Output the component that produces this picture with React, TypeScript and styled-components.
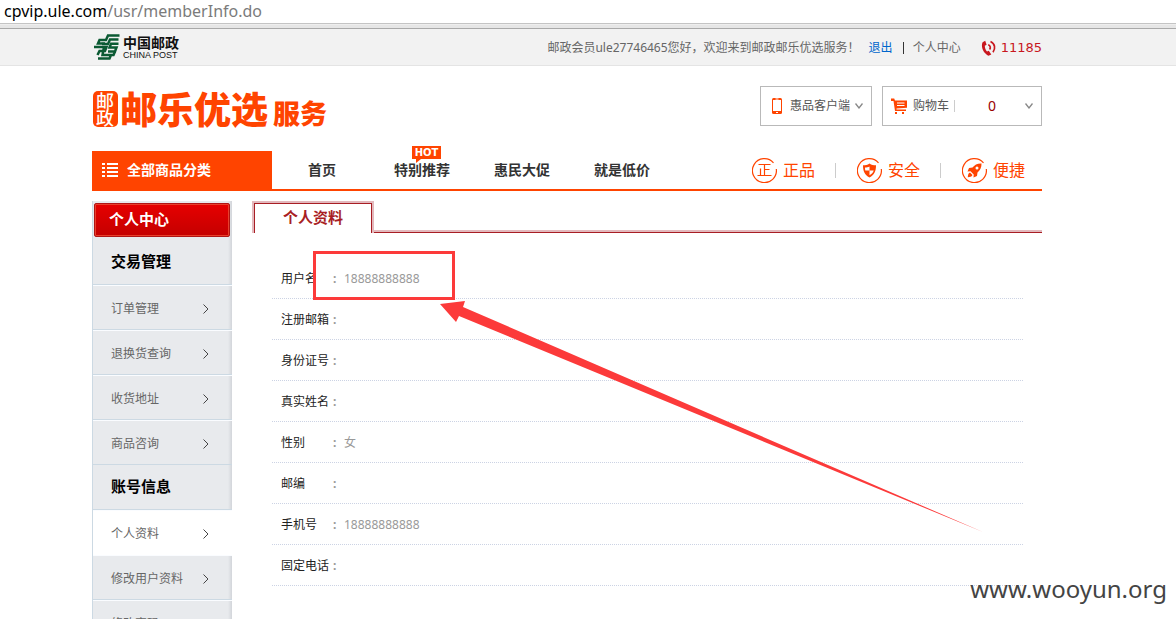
import React from 'react';
import styled, { createGlobalStyle, css } from 'styled-components';

const orange = '#ff4400';
const annotation = '#fc3a3a';

const GlobalStyle = createGlobalStyle`
  * { box-sizing: border-box; }
  html, body, #root { height: 100%; }
  body {
    margin: 0;
    overflow: hidden;
    background: #fff;
    color: #666;
    font: 12px/18px "Noto Sans", "Noto Sans CJK SC", sans-serif;
  }
  h2, h3, p, ul, dl, dd { margin: 0; padding: 0; }
  ul { list-style: none; }
  a { color: inherit; text-decoration: none; }
  svg { display: block; flex: none; }
`;

const Page = styled.div`
  position: relative;
  height: 100%;
  overflow: hidden;
`;

const AddressBar = styled.div`
  height: 29px;
  padding-left: 4px;
  border-bottom: 1px solid #a9a9a9;
  background: linear-gradient(#fff 23px, #c4c4c4 23px, #c4c4c4 24px, #f6f6f6 24px, #e6e6e6 25px);
  color: #7b7b7b;
  font-size: 16px;
  line-height: 22px;
  white-space: nowrap;
  overflow: hidden;
`;

const Host = styled.span`
  color: #000;
`;

const Container = styled.div`
  max-width: 992px;
  margin: 0 auto;
  padding-right: 42px;
`;

const TopBar = styled.div`
  background: #f2f2f2;
  border-bottom: 1px solid #e4e4e4;
`;

const TopBarInner = styled(Container)`
  display: flex;
  justify-content: space-between;
  align-items: center;
  height: 36px;
`;

const PostLogo = styled.a`
  display: flex;
  align-items: center;
  gap: 3px;
  padding-left: 2px;
  color: #111;
`;

const PostNames = styled.span`
  display: flex;
  flex-direction: column;
  font: 700 14px/16px "Noto Sans CJK SC", sans-serif;
`;

const PostLatin = styled.span`
  font: 9px/10px "Liberation Sans", sans-serif;
`;

const Greeting = styled.div`
  display: flex;
  align-items: center;
  padding-top: 2px;
`;

const Logout = styled.a`
  margin-left: 9px;
  color: #0066cc;
`;

const Bar = styled.span`
  width: 1px;
  height: 12px;
  margin: 0 9px 0 10px;
  background: #333;
`;

const Hotline = styled.span`
  display: flex;
  align-items: center;
  gap: 4px;
  margin-left: 20px;
  color: #c8171e;
  font: 13px/18px "DejaVu Sans", sans-serif;
`;

const Header = styled(Container)`
  display: flex;
  justify-content: space-between;
  align-items: flex-start;
  padding-top: 20px;
  height: 85px;
`;

const Brand = styled.a`
  && { color: ${orange}; }
  display: flex;
  align-items: flex-end;
  margin-top: 3px;
  padding-left: 1px;
  font-family: "Noto Sans CJK SC", sans-serif;
  font-weight: 900;
`;

const Seal = styled.span`
  width: 25px;
  height: 36px;
  margin-right: 2px;
  padding: 1px 3px;
  border-radius: 5px;
  background: ${orange};
  color: #fff;
  font-size: 18px;
  font-weight: 500;
  line-height: 17px;
`;

const BrandMain = styled.span`
  font-size: 37px;
  line-height: 38px;
`;

const BrandSub = styled.span`
  margin-left: 5px;
  font-size: 27px;
  line-height: 28px;
`;

const HeaderTools = styled.div`
  display: flex;
  gap: 10px;
`;

const ToolButton = styled.button<{ $width: number }>`
  display: flex;
  align-items: center;
  width: ${(p) => p.$width}px;
  height: 40px;
  padding: 0 8px;
  border: 1px solid #b9b9b9;
  background: #fff;
  color: #555;
  font: inherit;
  white-space: nowrap;
`;

const ToolLabel = styled.span`
  margin: 0 5px;
`;

const CartCount = styled.span`
  flex: 1;
  margin-right: 4px;
  padding-left: 8px;
  border-left: 1px solid #ccc;
  color: #900;
  font-size: 14px;
  line-height: 12px;
  text-align: center;
`;

const NavBar = styled.nav`
  display: flex;
  height: 40px;
  border-bottom: 2px solid ${orange};
`;

const Categories = styled.a`
  display: flex;
  align-items: center;
  gap: 9px;
  width: 180px;
  height: 40px;
  padding: 0 10px 2px;
  background: ${orange};
  && { color: #fff; }
  font-size: 14px;
  font-weight: 700;
`;

const NavLink = styled.a`
  position: relative;
  width: 100px;
  color: #333;
  font-size: 14px;
  font-weight: 700;
  line-height: 38px;
  text-align: center;
`;

const HotBadge = styled.span`
  position: absolute;
  top: -5px;
  left: 40px;
  width: 29px;
  height: 13px;
  background: ${orange};
  color: #fff;
  font: 700 10px/14px "DejaVu Sans", sans-serif;

  &::after {
    content: '';
    position: absolute;
    top: 13px;
    left: 4px;
    border-top: 4px solid ${orange};
    border-right: 5px solid transparent;
  }
`;

const Promises = styled.ul`
  display: flex;
  align-items: center;
  margin-left: auto;
  padding-right: 17px;
`;

const PromiseItem = styled.li`
  display: flex;
  align-items: center;
  gap: 6px;
  color: ${orange};
  font-size: 16px;

  & + & {
    margin-left: 20px;
  }
  & + &::before {
    content: '';
    width: 1px;
    height: 15px;
    margin-right: 15px;
    background: #ccc;
  }
`;

const Columns = styled(Container)`
  display: flex;
  align-items: flex-start;
  gap: 20px;
  padding-top: 10px;
`;

const sideEdge = css`
  background: linear-gradient(to left, #d2d5da, #e8eaed 4px);
`;

const Sidebar = styled.aside`
  flex: none;
  width: 140px;
  padding-top: 2px;
  border-left: 1px solid #ccd9e3;
  ${sideEdge}
`;

const SideHeading = styled.h2`
  height: 34px;
  margin: 0 2px 3px 1px;
  padding-left: 14px;
  border: 1px solid #b01515;
  border-radius: 2px;
  background: linear-gradient(#e60000, #c40000);
  box-shadow: inset 0 0 0 1px #e8402c;
  color: #fff;
  font-size: 15px;
  line-height: 31px;
`;

const SideTitle = styled.h3`
  height: 45px;
  padding-left: 18px;
  border-bottom: 1px solid #ccd9e3;
  color: #000;
  font-size: 15px;
  line-height: 42px;
`;

const SideLink = styled.a<{ $active?: boolean }>`
  display: flex;
  align-items: center;
  justify-content: space-between;
  height: 45px;
  padding: 2px 23px 0 18px;
  border-top: 1px solid #fafcff;
  border-bottom: 1px solid ${(p) => (p.$active ? '#fff' : '#ccd9e3')};
  ${(p) => p.$active && 'background: #fff;'}
`;

const Main = styled.main`
  flex: 1;
`;

const TabStrip = styled.div`
  display: flex;
  height: 32px;

  &::after {
    content: '';
    flex: 1;
    border-bottom: 1px solid #a81e24;
    box-shadow: inset 0 -2px #e3b9bd;
  }
`;

const Tab = styled.h2`
  width: 122px;
  border: 2px solid #e3b9bd;
  border-bottom: 0;
`;

const TabFace = styled.span`
  display: block;
  height: 30px;
  border: 1px solid #a81e24;
  border-bottom: 0;
  color: #a81e24;
  font-size: 15px;
  line-height: 26px;
  text-align: center;
`;

const Profile = styled.dl`
  margin: 25px 19px 0 20px;
`;

const Field = styled.div`
  display: flex;
  align-items: center;
  height: 41px;
  padding: 2px 0 0 9px;
  border-bottom: 1px dotted #ccd3e4;
`;

const FieldName = styled.dt`
  width: 52px;
  color: #222;
  white-space: nowrap;
`;

const FieldValue = styled.dd`
  color: #999;

  &::before {
    content: ':';
    display: inline-block;
    width: 11px;
    font-weight: 700;
  }
`;

const Highlight = styled.div`
  position: absolute;
  top: 251px;
  left: 313px;
  width: 142px;
  height: 49px;
  border: 3px solid ${annotation};
`;

const Pointer = styled.svg`
  position: absolute;
  top: 300px;
  left: 440px;
`;

const Watermark = styled.p`
  position: absolute;
  right: 9px;
  bottom: 13px;
  color: #444;
  font: 24px/34px "Noto Sans", sans-serif;
`;

const PostEmblem = () => (
  <svg width="26" height="26" viewBox="0 0 26 26" fill="none" stroke="#0b5a33" strokeWidth="2.500">
    <path d="M25.500 1.500H14L12 6H5.500L4 9.500H11" />
    <path d="M24.500 5.500H16L14 10H8" />
    <path d="M0 13H12.500L11 17H5.500L3.500 21" />
    <path d="M24.500 9.800H17L15.500 13.500H22.500L21 17.500H14" />
    <path d="M10 13L8.500 21H19.500L21 17.500M4 24.500H15.500L17 21" />
  </svg>
);

const PhoneIcon = () => (
  <svg width="16" height="16" viewBox="0 0 16 16" fill="none" stroke="#c8171e">
    <path d="M4.200 .800L1.600 2.300C-.500 7 2.500 13.300 7.500 15.800L10.300 14.600L7.800 10.800L6 11.500C4.500 10 3.800 8 3.800 5.800L5.600 4.800Z" fill="#c8171e" stroke="none" />
    <path d="M7.200 4.800C9.500 5.500 9.800 8 8.600 9.500M9.500 1.500C14 3.500 14.800 8.500 12 12.200" strokeWidth="1.700" />
  </svg>
);

const MobileIcon = () => (
  <svg width="16" height="16" viewBox="0 0 16 16">
    <rect x="3" width="10" height="16" rx="1.500" fill={orange} />
    <rect x="4" y="2" width="8" height="11" fill="#fff" />
    <path d="M6.500 1h3M7 14.500h2" stroke="#fff" strokeWidth="1" />
  </svg>
);

const CartIcon = () => (
  <svg width="17" height="16" viewBox="0 0 17 16">
    <path d="M0 .500H3.200L4 2.500H16V9.800L5.500 10.500V11.500H15V13H4L2.500 3H0Z" fill={orange} />
    <path d="M6 5H13.500M6 7.500H13.500" stroke="#fff" strokeWidth="1" />
    <rect x="4" y="14" width="2" height="2" fill={orange} />
    <rect x="11" y="14" width="2" height="2" fill={orange} />
  </svg>
);

const ChevronDown = () => (
  <svg width="8" height="6" viewBox="0 0 8 6" fill="none" stroke="#888" strokeWidth="1.300">
    <path d="M.5 .5L4 5L7.500 .5" />
  </svg>
);

const ChevronRight = () => (
  <svg width="6" height="10" viewBox="0 0 6 10" fill="none" stroke="#444">
    <path d="M.5 .5L5 5L.5 9.500" />
  </svg>
);

const ListIcon = () => (
  <svg width="16" height="14" viewBox="0 0 16 14" stroke="#fff" strokeWidth="2">
    <path d="M0 1H3M5 1H16M0 5H3M5 5H16M0 9H3M5 9H16M0 13H3M5 13H16" />
  </svg>
);

const Ring = ({ children }: { children: React.ReactNode }) => (
  <svg width="25" height="25" viewBox="0 0 25 25" fill="none" stroke={orange}>
    <path d="M21.500 4.800A12 12 0 1 0 24.300 11" strokeWidth="1.200" />
    {children}
  </svg>
);

const SealMark = () => (
  <Ring>
    <path d="M6.500 6.500H18.500M12.500 6.500V17.500M12.500 11.500H17.500M8.500 10.500V17.500M5.500 17.500H19.500" strokeWidth="1.200" />
  </Ring>
);

const ShieldMark = () => (
  <Ring>
    <path d="M12.500 5.500C10.500 7 8.500 7.300 6 7.300C6 13 7.500 17 12.500 19.500C17.500 17 19 13 19 7.300C16.500 7.300 14.500 7 12.500 5.500Z" fill={orange} stroke="none" />
    <path d="M12.500 8.500V12.500H8.300C8 11.500 8 10.500 8 9.500C9.500 9.500 11.300 9.200 12.500 8.500ZM12.500 12.500H16.700C16 14.700 14.800 16 12.500 17.200Z" fill="#fff" stroke="none" />
  </Ring>
);

const RocketMark = () => (
  <Ring>
    <path d="M19.500 5.500C15.500 5.300 12.500 7 10.500 9.500L7 10L5.500 13.500L8.500 13.300L11.700 16.500L11.500 19.500L15 18L15.500 14.500C18 12.500 19.700 9.500 19.500 5.500ZM8 14.500C6 15.500 6 17 5.800 19.200C8 19 9.500 19 10.500 17Z" fill={orange} stroke="none" />
    <circle cx="15" cy="10" r="1.500" fill="#fff" stroke="none" />
  </Ring>
);

const navItems = ['首页', '特别推荐', '惠民大促', '就是低价'];

const promises = [
  { name: '正品', icon: <SealMark /> },
  { name: '安全', icon: <ShieldMark /> },
  { name: '便捷', icon: <RocketMark /> },
];

const sideGroups = [
  { title: '交易管理', links: ['订单管理', '退换货查询', '收货地址', '商品咨询'] },
  { title: '账号信息', links: ['个人资料', '修改用户资料', '修改密码'] },
];

const fields = [
  ['用户名', '18888888888'],
  ['注册邮箱', ''],
  ['身份证号', ''],
  ['真实姓名', ''],
  ['性别', '女'],
  ['邮编', ''],
  ['手机号', '18888888888'],
  ['固定电话', ''],
];

export default function App() {
  return (
    <Page>
      <GlobalStyle />
      <AddressBar>
        <Host>cpvip.ule.com</Host>/usr/memberInfo.do
      </AddressBar>
      <TopBar>
        <TopBarInner>
          <PostLogo href="#">
            <PostEmblem />
            <PostNames>
              中国邮政
              <PostLatin>CHINA POST</PostLatin>
            </PostNames>
          </PostLogo>
          <Greeting>
            <span>邮政会员ule27746465您好，欢迎来到邮政邮乐优选服务！</span>
            <Logout href="#">退出</Logout>
            <Bar />
            <a href="#">个人中心</a>
            <Hotline><PhoneIcon />11185</Hotline>
          </Greeting>
        </TopBarInner>
      </TopBar>
      <Header as="header">
        <Brand href="#">
          <Seal>邮政</Seal>
          <BrandMain>邮乐优选</BrandMain>
          <BrandSub>服务</BrandSub>
        </Brand>
        <HeaderTools>
          <ToolButton type="button" $width={112}>
            <MobileIcon />
            <ToolLabel>惠品客户端</ToolLabel>
            <ChevronDown />
          </ToolButton>
          <ToolButton type="button" $width={160}>
            <CartIcon />
            <ToolLabel>购物车</ToolLabel>
            <CartCount>0</CartCount>
            <ChevronDown />
          </ToolButton>
        </HeaderTools>
      </Header>
      <Container>
        <NavBar>
          <Categories href="#"><ListIcon />全部商品分类</Categories>
          {navItems.map((name) => (
            <NavLink href="#" key={name}>
              {name}
              {name === '特别推荐' && <HotBadge>HOT</HotBadge>}
            </NavLink>
          ))}
          <Promises>
            {promises.map((p) => (
              <PromiseItem key={p.name}>{p.icon}{p.name}</PromiseItem>
            ))}
          </Promises>
        </NavBar>
      </Container>
      <Columns>
        <Sidebar>
          <SideHeading>个人中心</SideHeading>
          {sideGroups.map((group) => (
            <React.Fragment key={group.title}>
              <SideTitle>{group.title}</SideTitle>
              {group.links.map((name) => (
                <SideLink href="#" key={name} $active={name === '个人资料'}>
                  {name}
                  <ChevronRight />
                </SideLink>
              ))}
            </React.Fragment>
          ))}
        </Sidebar>
        <Main>
          <TabStrip>
            <Tab><TabFace>个人资料</TabFace></Tab>
          </TabStrip>
          <Profile>
            {fields.map(([name, value]) => (
              <Field key={name}>
                <FieldName>{name}</FieldName>
                <FieldValue>{value}</FieldValue>
              </Field>
            ))}
          </Profile>
        </Main>
      </Columns>
      <Highlight />
      <Pointer width="544" height="234" viewBox="0 0 544 234">
        <path d="M0 4L25 1L23 7L543 232L19 16L16 22Z" fill={annotation} />
      </Pointer>
      <Watermark>www.wooyun.org</Watermark>
    </Page>
  );
}
